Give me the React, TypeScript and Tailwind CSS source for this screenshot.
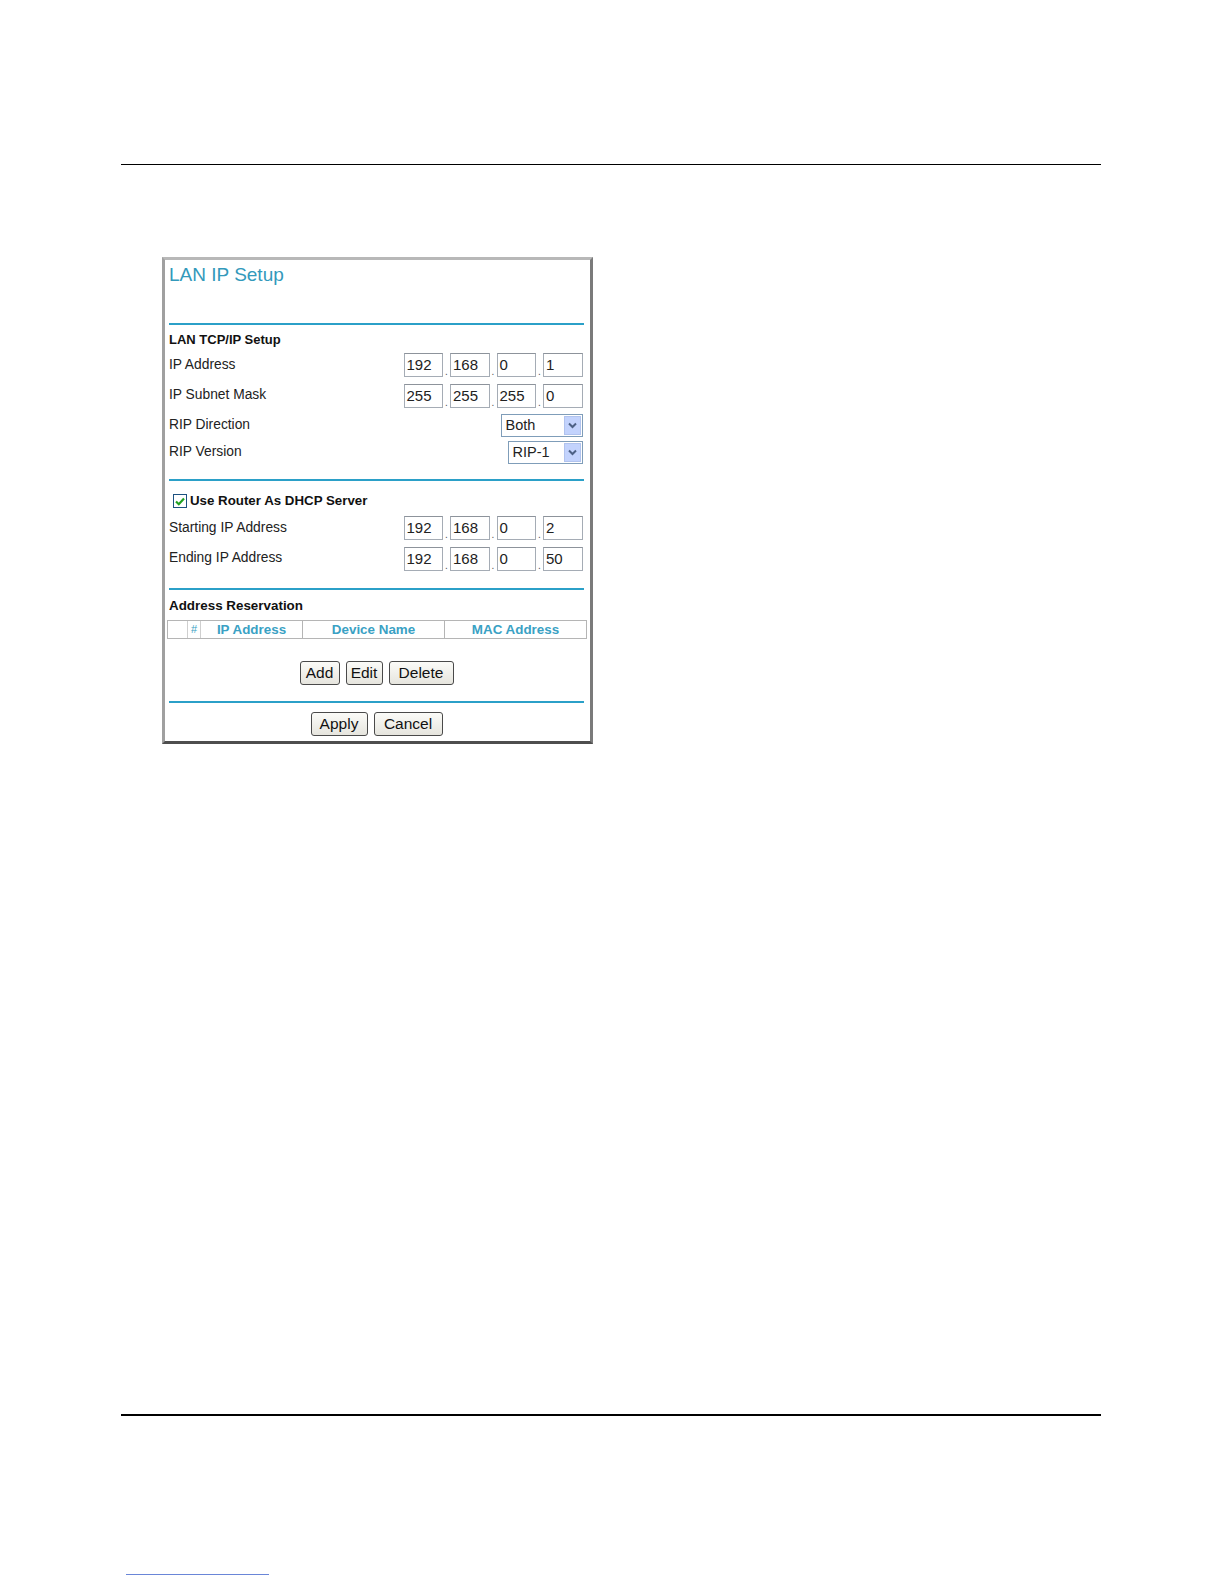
import React from "react";

const FONT = { fontFamily: '"Liberation Sans", Arial, sans-serif' };

function IpBoxes({ parts }: { parts: string[] }) {
  return (
    <div className="flex items-end mr-[1.5px]">
      {parts.map((p, i) => (
        <React.Fragment key={i}>
          {i > 0 && (
            <span className="w-[7px] text-center text-[10px] leading-[10px] text-[#555]">.</span>
          )}
          <div className="w-[39.5px] h-[24px] border border-[#a5acb5] border-t-[#8d939b] bg-white pl-[2px] text-[15px] leading-[22px] text-[#222]">
            {p}
          </div>
        </React.Fragment>
      ))}
    </div>
  );
}

function Select({ value, width }: { value: string; width: string }) {
  return (
    <div className={`${width} h-[23px] mr-[1.5px] flex border border-[#7f9db9] bg-white`}>
      <div className="flex-1 pl-[4px] text-[14.5px] leading-[21px] text-[#222]">{value}</div>
      <div className="w-[17px] m-[1px] bg-[#c3d3fd] border border-[#b1c3ee] flex items-center justify-center">
        <svg width="9" height="7" viewBox="0 0 9 7">
          <path d="M1 1.5 L4.5 5 L8 1.5" fill="none" stroke="#4d6185" strokeWidth="2" />
        </svg>
      </div>
    </div>
  );
}

function Row({ label, children, h = "h-[24px]" }: { label: string; children: React.ReactNode; h?: string }) {
  return (
    <div className={`flex items-center justify-between ${h}`}>
      <span className="text-[13.8px] text-[#222]">{label}</span>
      {children}
    </div>
  );
}

function Btn({ label, w }: { label: string; w: string }) {
  return (
    <button
      className={`${w} h-[24px] rounded-[3px] border border-[#4a4a4a] bg-gradient-to-b from-[#fbfbf8] to-[#e6e5de] text-[15.5px] leading-[20px] text-[#111]`}
    >
      {label}
    </button>
  );
}

function Rule() {
  return <div className="h-[2px] bg-[#2ba0c8]" />;
}

export default function App() {
  return (
    <div className="w-[1224px] h-[1584px] bg-white flex flex-col pt-[164px]" style={FONT}>
      <div className="ml-[121px] mr-[123px] h-[1px] bg-black" />

      <div className="ml-[162px] mt-[92px] w-[431px] h-[487px] border-[3px] border-t-[#b8b8b8] border-l-[#a0a0a0] border-r-[#7a7a7a] border-b-[#4e4e4e] bg-white pl-[4px] pr-[6px] flex flex-col">
        <div className="h-[63px] pt-[3px] text-[19px] leading-[24px] text-[#3399bb]">LAN IP Setup</div>
        <Rule />

        <div className="h-[28px] pt-[7px] text-[13px] leading-[16px] font-bold text-[#111]">LAN TCP/IP Setup</div>
        <Row label="IP Address">
          <IpBoxes parts={["192", "168", "0", "1"]} />
        </Row>
        <div className="mt-[6.5px]">
          <Row label="IP Subnet Mask">
            <IpBoxes parts={["255", "255", "255", "0"]} />
          </Row>
        </div>
        <div className="mt-[6.5px]">
          <Row label="RIP Direction" h="h-[23px]">
            <Select value="Both" width="w-[82px]" />
          </Row>
        </div>
        <div className="mt-[4px]">
          <Row label="RIP Version" h="h-[23px]">
            <Select value="RIP-1" width="w-[75px]" />
          </Row>
        </div>

        <div className="mt-[15px]">
          <Rule />
        </div>

        <div className="mt-[10px] h-[20px] flex items-center pl-[4px]">
          <div className="w-[14px] h-[14px] border border-[#1c5180] bg-white flex items-center justify-center">
            <svg width="10" height="9" viewBox="0 0 10 9">
              <path d="M1 4.5 L3.8 7.2 L9 1.5" fill="none" stroke="#21a121" strokeWidth="2.2" />
            </svg>
          </div>
          <span className="ml-[3px] text-[13.3px] font-bold text-[#111]">Use Router As DHCP Server</span>
        </div>
        <div className="mt-[5px]">
          <Row label="Starting IP Address">
            <IpBoxes parts={["192", "168", "0", "2"]} />
          </Row>
        </div>
        <div className="mt-[6.5px]">
          <Row label="Ending IP Address">
            <IpBoxes parts={["192", "168", "0", "50"]} />
          </Row>
        </div>

        <div className="mt-[17.5px]">
          <Rule />
        </div>

        <div className="mt-[7.5px] text-[13.4px] leading-[16px] font-bold text-[#111]">Address Reservation</div>
        <div className="mt-[6px] -ml-[2px] -mr-[3px] h-[19px] flex border border-[#b5b5b5] text-[13.4px] font-bold text-[#3aa1c4] leading-[17px]">
          <div className="w-[20px] border-r border-[#cfcfcf]" />
          <div className="w-[13px] border-r border-[#cfcfcf] text-center font-normal text-[11px]">#</div>
          <div className="w-[102px] border-r border-[#b5b5b5] text-center">IP Address</div>
          <div className="w-[142px] border-r border-[#b5b5b5] text-center">Device Name</div>
          <div className="flex-1 text-center">MAC Address</div>
        </div>

        <div className="mt-[22.5px] flex justify-center gap-[6px]">
          <Btn label="Add" w="w-[40px]" />
          <Btn label="Edit" w="w-[37px]" />
          <Btn label="Delete" w="w-[65px]" />
        </div>

        <div className="mt-[15.5px]">
          <Rule />
        </div>

        <div className="mt-[9px] flex justify-center gap-[6px]">
          <Btn label="Apply" w="w-[57px]" />
          <Btn label="Cancel" w="w-[69px]" />
        </div>
      </div>

      <div className="mt-[670px] ml-[121px] mr-[123px] h-[2px] bg-black" />
      <div className="ml-[126px] mt-[158px] w-[143px] h-[1px] bg-[#6a86d8]" />
    </div>
  );
}
